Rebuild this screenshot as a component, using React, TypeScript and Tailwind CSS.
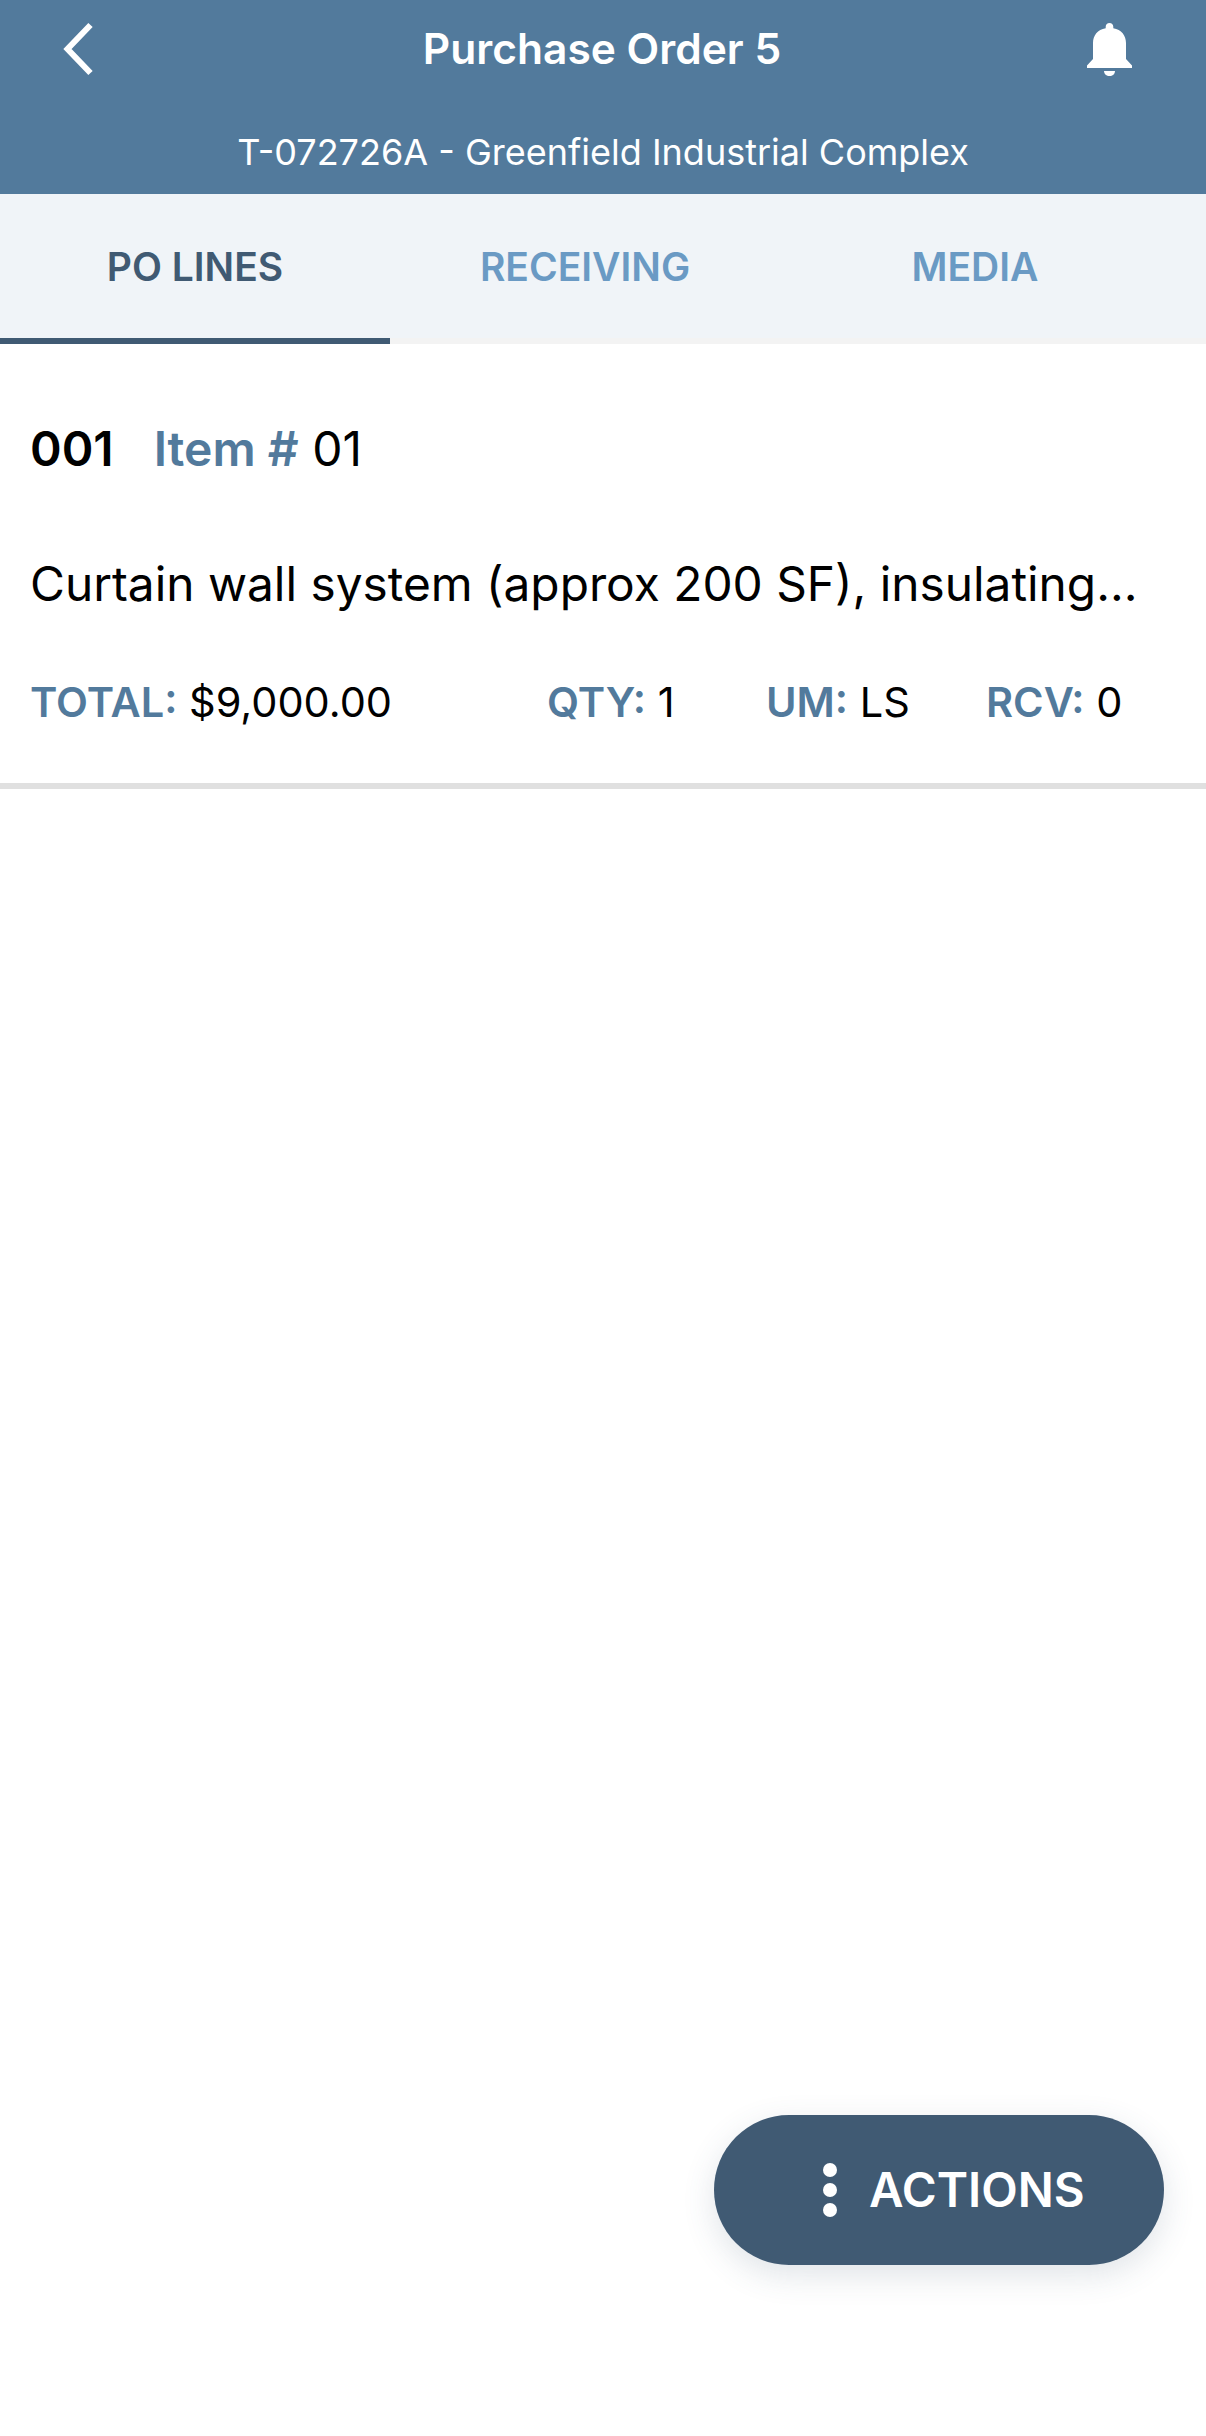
import React from "react";

const tabs = ["PO LINES", "RECEIVING", "MEDIA"];

function Stat({ label, value, className }: { label: string; value: string; className?: string }) {
  return (
    <div className={`whitespace-nowrap ${className ?? ""}`}>
      <span className="font-semibold text-[#527a9c]">{label}</span> <span>{value}</span>
    </div>
  );
}

export default function App() {
  return (
    <div className="relative h-[2436px] w-full overflow-hidden bg-white font-['Inter',sans-serif] text-black">
      {/* Header */}
      <div className="h-[194px] bg-[#527a9c] text-white">
        <div className="flex h-[97px] items-center pl-[62px] pr-[74px]">
          <svg width="36" height="54" viewBox="0 0 36 54" fill="none" className="mt-[1px]">
            <path d="M28.500 3 L5.500 27 L28.500 51" stroke="white" strokeWidth="6" />
          </svg>
          <div className="flex-1 pl-[19px] text-center text-[42.5px] font-semibold">Purchase Order 5</div>
          <svg width="45" height="53" viewBox="0 0 45 53" fill="white" className="mt-[1px]">
            <path d="M22.500 0c-2.200 0-3.800 1.600-3.800 3.800v1.400C10.500 6.500 6 12.500 6 20v16l-6 6.500V45h45v-2.500L39 36V20c0-7.500-4.500-13.500-12.700-14.800V3.800C26.300 1.600 24.700 0 22.500 0z" />
            <path d="M17 48h11c0 3-2.500 5-5.500 5S17 51 17 48z" />
          </svg>
        </div>
        <div className="mt-[29px] text-center text-[36px] leading-[52px]">T-072726A - Greenfield Industrial Complex</div>
      </div>

      {/* Tabs */}
      <div className="flex h-[150px] border-b-[6px] border-[#f3f3f3] bg-[#f0f4f8]">
        {tabs.map((tab, i) => (
          <div
            key={tab}
            className={`-mb-[6px] flex w-[390px] items-center justify-center border-b-[6px] pt-[2px] text-[39px] font-semibold ${
              i === 0 ? "border-[#405a73] text-[#405a73]" : "border-[#f3f3f3] text-[#6a9ac4]"
            }`}
          >
            {tab}
          </div>
        ))}
      </div>

      {/* PO line */}
      <div className="border-b-[6px] border-[#e0e0e0] pl-[30px] pr-[30px]">
        <div className="flex items-center gap-[40px] pt-[77px] text-[48px] leading-[56px]">
          <span className="font-semibold">001</span>
          <span>
            <span className="font-semibold text-[#527a9c]">Item #</span> 01
          </span>
        </div>
        <div className="mt-[79px] whitespace-nowrap text-[47.8px] leading-[56px]">
          Curtain wall system (approx 200 SF), insulating...
        </div>
        <div className="mt-[62px] flex pb-[53px] text-[41.5px] leading-[56px]">
          <Stat label="TOTAL:" value="$9,000.00" className="w-[517px]" />
          <Stat label="QTY:" value="1" className="w-[219px]" />
          <Stat label="UM:" value="LS" className="w-[220px]" />
          <Stat label="RCV:" value="0" />
        </div>
      </div>

      {/* Floating button */}
      <div className="absolute left-[714px] top-[2115px] flex h-[150px] w-[450px] items-center rounded-full bg-[#405a73] pl-[109px] text-white shadow-[0_10px_32px_rgba(64,90,115,0.16)]">
        <div className="flex flex-col gap-[6px]">
          <span className="h-[14px] w-[14px] rounded-full bg-white" />
          <span className="h-[14px] w-[14px] rounded-full bg-white" />
          <span className="h-[14px] w-[14px] rounded-full bg-white" />
        </div>
        <span className="ml-[32px] text-[47.5px] font-semibold">ACTIONS</span>
      </div>
    </div>
  );
}
